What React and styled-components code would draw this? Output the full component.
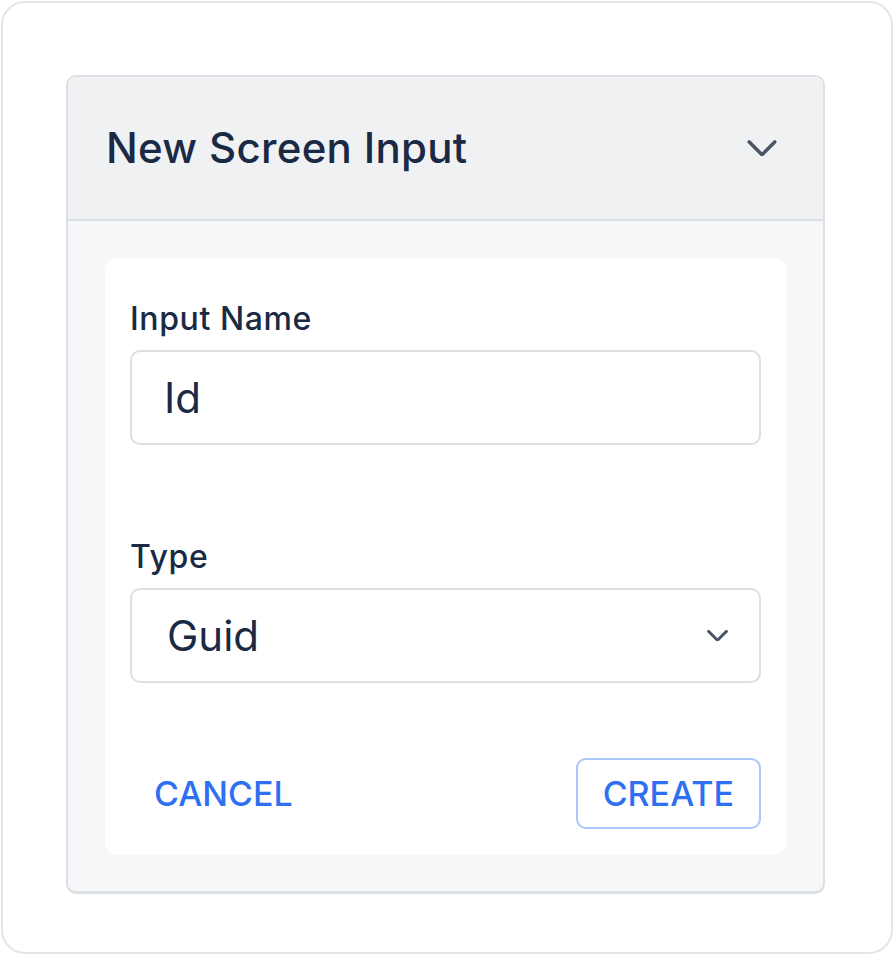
import React from 'react';
import styled, {createGlobalStyle} from 'styled-components';

const GlobalStyle = createGlobalStyle`
  html, body {
    margin: 0;
    padding: 0;
    background: #ffffff;
  }
  body {
    font-family: Inter, "Noto Sans", "Liberation Sans", sans-serif;
    color: #1e293b;
  }
`;

const Chevron = ({size, stroke}) => (
  <svg width={size} height={size / 1.8} viewBox="0 0 30 17" fill="none">
    <path d="M2 2 L15 15 L28 2" stroke="#4a5568" strokeWidth={stroke} strokeLinecap="round" strokeLinejoin="round"/>
  </svg>
);

const App = () => {
  return (
    <>
      <GlobalStyle/>
      <Frame>
        <Panel>
          <Header>
            <Title>New Screen Input</Title>
            <Chevron size={30} stroke={3.6}/>
          </Header>
          <Body>
            <Card>
              <Field>
                <Label>Input Name</Label>
                <TextInput>Id</TextInput>
              </Field>
              <Field $top={92}>
                <Label>Type</Label>
                <Select>
                  <span>Guid</span>
                  <Chevron size={21} stroke={4.2}/>
                </Select>
              </Field>
              <Actions>
                <TextButton>CANCEL</TextButton>
                <OutlineButton>CREATE</OutlineButton>
              </Actions>
            </Card>
          </Body>
        </Panel>
      </Frame>
    </>
  );
};

export default App;

const Frame = styled.div`
  box-sizing: border-box;
  width: 892px;
  height: 953px;
  margin: 1px;
  border: 2px solid #e3e5e9;
  border-radius: 24px;
  padding: 72px 0 0 63px;
`;

const Panel = styled.div`
  box-sizing: border-box;
  width: 759px;
  border: 2px solid #dcdfe4;
  border-bottom-width: 3px;
  border-radius: 10px;
  overflow: hidden;
  background: #f6f7f9;
`;

const Header = styled.div`
  box-sizing: border-box;
  height: 144px;
  display: flex;
  align-items: center;
  justify-content: space-between;
  padding: 0 46px 0 38px;
  background: #f0f1f3;
  border-bottom: 2px solid #dcdfe4;
`;

const Title = styled.h1`
  margin: 0;
  font-size: 42px;
  font-weight: 500;
  color: #1a2a44;
  letter-spacing: 0.3px;
  line-height: 1;
`;

const Body = styled.div`
  padding: 37px 37px 36px;
`;

const Card = styled.div`
  background: #ffffff;
  border-radius: 12px;
  padding: 41px 25px 26px 25px;
`;

const Field = styled.div`
  display: flex;
  flex-direction: column;
  gap: 11px;
  margin-top: ${p => (p.$top ? `${p.$top}px` : '0')};
`;

const Label = styled.label`
  font-size: 32px;
  line-height: 40px;
  font-weight: 500;
  letter-spacing: 0.6px;
  color: #1a2a44;
`;

const TextInput = styled.div`
  box-sizing: border-box;
  height: 95px;
  display: flex;
  align-items: center;
  padding: 0 32px;
  border: 2px solid #dcdfe4;
  border-radius: 10px;
  font-size: 42px;
  color: #1a2a44;
`;

const Select = styled(TextInput)`
  justify-content: space-between;
  padding: 0 31px 0 35px;
`;

const Actions = styled.div`
  display: flex;
  align-items: center;
  justify-content: space-between;
  margin-top: 75px;
`;

const ButtonBase = styled.button`
  box-sizing: border-box;
  height: 71px;
  background: transparent;
  font-family: Inter, "Noto Sans", "Liberation Sans", sans-serif;
  font-size: 34px;
  font-weight: 500;
  color: #2f6ff2;
  border-radius: 10px;
  cursor: pointer;
`;

const TextButton = styled(ButtonBase)`
  border: none;
  padding: 0 24px;
`;

const OutlineButton = styled(ButtonBase)`
  border: 2px solid #a9c7fb;
  padding: 0 25px;
`;
